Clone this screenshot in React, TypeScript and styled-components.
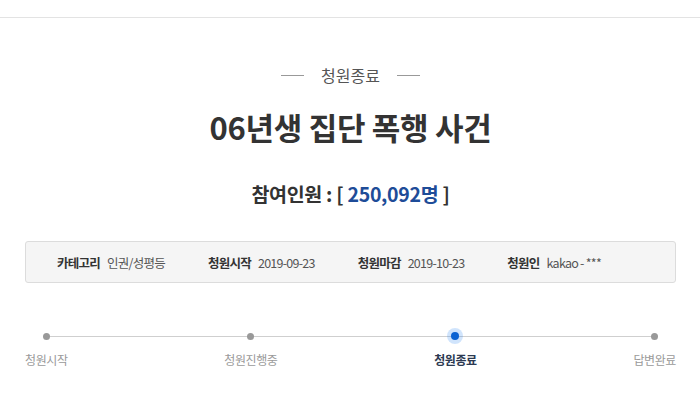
import React from 'react';
import styled, { createGlobalStyle } from 'styled-components';

const GlobalStyle = createGlobalStyle`
  html, body {
    margin: 0;
    padding: 0;
    background: #fff;
    font-family: "Noto Sans CJK KR", "Noto Sans", sans-serif;
    color: #333;
  }
`;

const Header = styled.div`
  height: 17px;
  border-bottom: 1px solid #e3e3e3;
`;

const Content = styled.div`
  padding: 0 24px 0 25px;
  display: flex;
  flex-direction: column;
  align-items: center;
`;

const Status = styled.div`
  margin-top: 46px;
  display: flex;
  align-items: center;
  gap: 17px;
  font-size: 16px;
  line-height: 22px;
  color: #555;

  &::before,
  &::after {
    content: '';
    width: 23px;
    height: 1px;
    background: #999;
  }
`;

const Title = styled.h1`
  margin: 21px 0 0;
  font-size: 31px;
  line-height: 40px;
  font-weight: 700;
  color: #333;
  letter-spacing: -0.3px;
`;

const Count = styled.div`
  margin-top: 33px;
  font-size: 19.5px;
  line-height: 28px;
  font-weight: 700;
  color: #333;
  letter-spacing: -0.3px;
`;

const Number = styled.span`
  color: #1e4c98;
`;

const InfoBox = styled.div`
  align-self: stretch;
  margin-top: 33px;
  height: 40px;
  display: flex;
  align-items: center;
  gap: 43px;
  padding: 0 31px;
  background: #f5f5f5;
  border: 1px solid #dcdcdc;
  border-radius: 3px;
`;

const InfoItem = styled.div`
  display: flex;
  align-items: center;
  gap: 7px;
  font-size: 12.5px;
  letter-spacing: -0.75px;
  white-space: nowrap;
`;

const InfoLabel = styled.span`
  font-weight: 700;
  color: #333;
`;

const InfoValue = styled.span`
  color: #555;
`;

const Steps = styled.div`
  align-self: stretch;
  position: relative;
  margin-top: 49px;
  display: flex;
  justify-content: space-between;

  &::before {
    content: '';
    position: absolute;
    top: 4px;
    left: 21px;
    right: 22px;
    height: 1px;
    background: #cfcfcf;
  }
`;

const Step = styled.div`
  position: relative;
  display: flex;
  flex-direction: column;
  align-items: center;
  gap: 11px;
`;

const Dot = styled.span<{ $active?: boolean }>`
  display: block;
  margin: ${(p) => (p.$active ? '0' : '0.5px')};
  width: ${(p) => (p.$active ? '8px' : '7px')};
  height: ${(p) => (p.$active ? '8px' : '7px')};
  border-radius: 50%;
  background: ${(p) => (p.$active ? '#0b62d2' : '#999')};
  box-shadow: ${(p) => (p.$active ? '0 0 0 4px rgba(40, 130, 240, 0.22)' : 'none')};
`;

const StepLabel = styled.span<{ $active?: boolean }>`
  font-size: 12px;
  line-height: 18px;
  letter-spacing: -0.4px;
  font-weight: ${(p) => (p.$active ? 700 : 400)};
  color: ${(p) => (p.$active ? '#2c3a52' : '#9a9a9a')};
`;

const info = [
  { label: '카테고리', value: '인권/성평등' },
  { label: '청원시작', value: '2019-09-23' },
  { label: '청원마감', value: '2019-10-23' },
  { label: '청원인', value: 'kakao - ***' },
];

const steps = [
  { name: '청원시작' },
  { name: '청원진행중' },
  { name: '청원종료', active: true },
  { name: '답변완료' },
];

export default function App() {
  return (
    <>
      <GlobalStyle />
      <Header />
      <Content>
        <Status>청원종료</Status>
        <Title>06년생 집단 폭행 사건</Title>
        <Count>
          참여인원 : [ <Number>250,092명</Number> ]
        </Count>
        <InfoBox>
          {info.map((item) => (
            <InfoItem key={item.label}>
              <InfoLabel>{item.label}</InfoLabel>
              <InfoValue>{item.value}</InfoValue>
            </InfoItem>
          ))}
        </InfoBox>
        <Steps>
          {steps.map((s) => (
            <Step key={s.name}>
              <Dot $active={s.active} />
              <StepLabel $active={s.active}>{s.name}</StepLabel>
            </Step>
          ))}
        </Steps>
      </Content>
    </>
  );
}
